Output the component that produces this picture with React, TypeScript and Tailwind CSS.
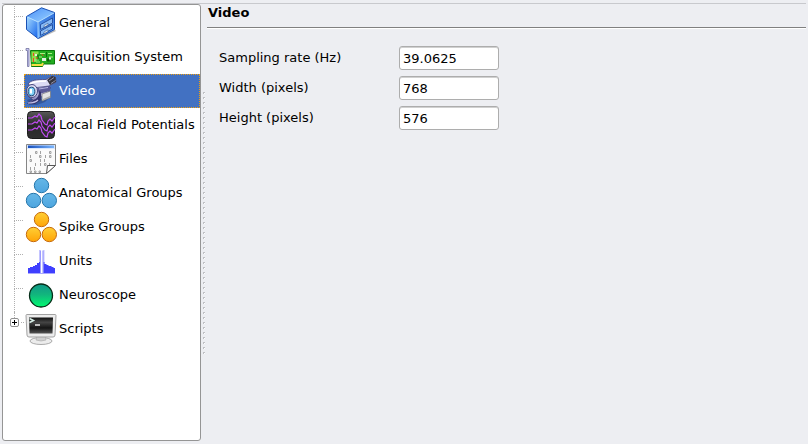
import { useState } from "react";
import type { ReactNode } from "react";

function CabinetIcon() {
  return (
    <svg viewBox="0 0 32 32" className="size-8">
      <defs>
        <linearGradient id="cabTop" x1="0" y1="0" x2="1" y2="1">
          <stop offset="0" stopColor="#4a90f8" />
          <stop offset="1" stopColor="#9ad2ff" />
        </linearGradient>
        <linearGradient id="cabSide" x1="0" y1="0" x2="1" y2="1">
          <stop offset="0" stopColor="#a8dcff" />
          <stop offset="1" stopColor="#1262ea" />
        </linearGradient>
        <linearGradient id="cabFront" x1="0" y1="0" x2="0" y2="1">
          <stop offset="0" stopColor="#2f70dc" />
          <stop offset="1" stopColor="#6cb0f8" />
        </linearGradient>
      </defs>
      <path d="M14 32 31 24l-2-2-16 8z" fill="#888" opacity=".6" />
      <path d="M1.500 9.500 16.500.8 29.500 5.500 13 15z" fill="url(#cabTop)" />
      <path d="M1.500 9.500 13 15v16.500L1.500 22.500z" fill="url(#cabSide)" />
      <path d="M13 15 29.500 5.500v17L13 31.500z" fill="url(#cabFront)" />
      <path d="M1.500 9.500 16.500.8 29.500 5.500v17L13 31.500 1.500 22.500z" fill="none" stroke="#1a50b4" strokeLinejoin="round" />
      <path d="M13 15v16M13 15 29 6M2.500 10 13 15" fill="none" stroke="#b4e0ff" strokeWidth=".9" />
      <path d="m15.500 17.500 12-6.500v5l-12 6.500zM15.500 24l12-6.500v4.500l-12 6.500z" fill="#86b9f5" stroke="#1f4a9c" strokeWidth=".9" />
      <path d="m19 18.500 4-2.200v1.700l-4 2.200zM19 25l4-2.200v1.700l-4 2.200z" fill="#f2faff" stroke="#234783" strokeWidth=".5" />
    </svg>
  );
}

function BoardIcon() {
  return (
    <svg viewBox="0 0 32 32" className="size-8">
      <path d="M1 7.500h3v18H2.500v-16H1z" fill="#c9c9f5" stroke="#72729e" strokeWidth=".8" />
      <path d="M5.500 9.500h24v13.500h-11l-1 2.500h-11z" fill="#22ac20" stroke="#0b780b" />
      <path d="M6.500 10.500h7v3h-2v7.500h-5z" fill="#8edc48" />
      <path d="M6.500 24h10.500l1-2" stroke="#f5df42" strokeWidth="2" fill="none" />
      <path d="M15 12.500h5m3 0h4M14 16h3m7 0h4M9 19h5M11 21h4" stroke="#a4f080" fill="none" />
      <path d="M13 13.500v5M21.500 11v5M25 18v3" stroke="#0c6a0c" fill="none" />
      <path d="M10 13h2v2h-2zM17 17h4v3h-4zM24 16.500h2v2h-2z" fill="#e4eee0" />
      <path d="M8.500 12v3M8.500 17v4M16.500 13l2 2M11 17h2" stroke="#ec4a20" />
      <path d="M22 17.500h2v3h-2z" fill="#0c5c0c" />
    </svg>
  );
}

function CameraIcon() {
  return (
    <svg viewBox="0 0 32 32" className="size-8">
      <defs>
        <linearGradient id="camBody" x1="0" y1="0" x2="0" y2="1">
          <stop offset="0" stopColor="#f4f3ff" />
          <stop offset=".45" stopColor="#c4c3e4" />
          <stop offset="1" stopColor="#6563a4" />
        </linearGradient>
      </defs>
      <path d="M2 25c4-2 8-2 14-1l10-3-6 6-8 3H4z" fill="#23386e" opacity=".45" />
      <path d="M2.500 28.500c4 0 8-1 11-5l9-5 3-6-10-3-7 1-6 4 1 7 4 3z" fill="url(#camBody)" stroke="#38386e" strokeWidth=".8" />
      <path d="M3 9c3-4 8-4.500 18-4.500l5-3 4.500 1L31 7l-7 4-8 1-8 1z" fill="#dcdbf4" stroke="#45457c" strokeWidth=".8" />
      <path d="M5 9c4-2.500 9-3 16-3" stroke="#fff" strokeWidth="1.500" fill="none" />
      <path d="m22 5 5-4 3.500 1L31 7l-6 3z" fill="#34343f" />
      <path d="m24 6 5-3.500M26 8.500l4.500-3" stroke="#a6a6bd" strokeWidth=".8" />
      <path d="m12 13 13-2v5l-11 3z" fill="#5b5a98" />
      <path d="m14 14 9-1.500" stroke="#b6b5e0" />
      <path d="m17 19 8.500-3v6.500L17 26z" fill="#e4e4e4" stroke="#777" strokeWidth=".7" />
      <path d="m18 24 7-3v1.500l-7 3z" fill="#aaa" />
      <path d="M8 25c4-1 6-4 6-9l2 1v8l-6 4H4z" fill="#34346e" />
      <ellipse cx="7" cy="16" rx="5.500" ry="6.500" fill="#dddcf3" stroke="#45457c" />
      <ellipse cx="6.500" cy="16.500" rx="3.400" ry="4.300" fill="#7fcff5" stroke="#174070" />
      <path d="M6 14v4.500" stroke="#fff" strokeWidth="2" />
      <path d="M3 28c4 0 8-1 10-3" stroke="#bfbde6" strokeWidth="1.200" fill="none" />
    </svg>
  );
}

function WavesIcon() {
  const wave = "M3 9h4l3-2 2 1 2-3 2 2 1 4 3 4 2 1 1-4 2-2 2 2 3-4";
  return (
    <svg viewBox="0 0 32 32" className="size-8">
      <defs>
        <linearGradient id="waveBg" x1="0" y1="0" x2="0" y2="1">
          <stop offset="0" stopColor="#585858" />
          <stop offset=".5" stopColor="#292929" />
          <stop offset="1" stopColor="#303030" />
        </linearGradient>
      </defs>
      <rect x="2.500" y="2.500" width="27" height="27" rx="4" fill="url(#waveBg)" stroke="#1c1c1c" />
      <g fill="none" stroke="#c24cf4" strokeWidth="1.200">
        <path d={wave} />
        <path d={wave} transform="translate(0 6)" />
        <path d={wave} transform="translate(0 12)" />
      </g>
    </svg>
  );
}

function FileIcon() {
  return (
    <svg viewBox="0 0 32 32" className="size-8">
      <defs>
        <linearGradient id="fileBar">
          <stop offset="0" stopColor="#174fbd" />
          <stop offset="1" stopColor="#79b4fb" />
        </linearGradient>
      </defs>
      <path d="M1.500 1.500h29v21l-9 8h-20z" fill="#fafafa" stroke="#858585" />
      <path d="M2 2h28v4H2z" fill="#d8e7ff" />
      <path d="M3 2.500h26v2.500H3z" fill="url(#fileBar)" />
      <g fill="none" stroke="#a2a2a2">
        <path d="M15.500 8v3M5.500 12v3M20.500 12v3M15.500 16v3M19.500 16v3M10.500 20v3M15.500 20v3M24.500 20v3M5.500 24v3M9.500 24v3" />
        <path d="M10.500 8.500h1.500v2h-1.500zM24.500 8.500H26v2h-1.500zM14.500 12.500H16v2h-1.500zM24.500 12.500H26v2h-1.500zM5 16.500h1.500v2H5zM19.500 20.500H21v2h-1.500zM5 28h1.500v1.500H5zM9.500 28H11v1.500H9.500zM14 28h1.500v1.500H14z" />
      </g>
      <path d="m21.500 30.500 1-8 8 0z" fill="#fff" stroke="#555" strokeLinejoin="round" />
    </svg>
  );
}

function CirclesIcon({ id, light, dark, edge }: { id: string; light: string; dark: string; edge: string }) {
  return (
    <svg viewBox="0 0 32 32" className="size-8">
      <defs>
        <linearGradient id={id} x1="0" y1="0" x2="0" y2="1">
          <stop offset="0" stopColor={light} />
          <stop offset="1" stopColor={dark} />
        </linearGradient>
      </defs>
      <g fill={`url(#${id})`} stroke={edge}>
        <circle cx="16.500" cy="8.500" r="7.200" />
        <circle cx="8.500" cy="23.500" r="7.200" />
        <circle cx="24.300" cy="23.500" r="7.200" />
      </g>
    </svg>
  );
}

function HistogramIcon() {
  return (
    <svg viewBox="0 0 32 32" className="size-8">
      <path d="M14 5h2v24h-2zM17.500 5h2v24h-2z" fill="#c4c4ff" />
      <path d="M3 28v-5h2v-1h3v-1h2v-1h2v-2h2v-1h1v11zM18.500 28V17h1v2h2v1h2v1h3v1h2v1h1.500v5z" fill="#3f3fff" />
      <path d="M3 28h27v1H3z" fill="#a8a8ff" />
      <path d="M15.500 6v22M18 6v22" stroke="#8080ff" strokeWidth=".6" />
    </svg>
  );
}

function ScopeIcon() {
  return (
    <svg viewBox="0 0 32 32" className="size-8">
      <defs>
        <linearGradient id="scope" x1="0" y1="0" x2="0" y2="1">
          <stop offset="0" stopColor="#109888" />
          <stop offset=".45" stopColor="#12b57d" />
          <stop offset="1" stopColor="#00fa70" />
        </linearGradient>
      </defs>
      <circle cx="16" cy="16.500" r="11.500" fill="url(#scope)" stroke="#062d18" strokeWidth="1.300" />
    </svg>
  );
}

function TerminalIcon() {
  return (
    <svg viewBox="0 0 32 32" className="size-8">
      <defs>
        <linearGradient id="screen" x1="0" y1="0" x2="0" y2="1">
          <stop offset="0" stopColor="#101010" />
          <stop offset=".3" stopColor="#454545" />
          <stop offset=".65" stopColor="#151515" />
          <stop offset="1" stopColor="#555" />
        </linearGradient>
      </defs>
      <ellipse cx="16" cy="28" rx="11" ry="3.500" fill="#ececec" stroke="#aaa" />
      <path d="M12 23h8l1 4q-5 2-10 0z" fill="#cfcfcf" stroke="#aaa" strokeWidth=".6" />
      <path d="M2 1.500h28q1 0 1 1L30 22q0 2-2 2H4q-2 0-2-2L1 2.500q0-1 1-1z" fill="#ececec" stroke="#a2a2a2" />
      <path d="M4 4.500h24l-.5 16h-23z" fill="url(#screen)" />
      <path d="m4.500 5.500 4 2-4 2" fill="none" stroke="#d6eee6" strokeWidth="1.500" />
      <path d="M10 12h5" stroke="#eee" strokeWidth="1.500" />
    </svg>
  );
}

const sections: { name: string; icon: ReactNode }[] = [
  { name: "General", icon: <CabinetIcon /> },
  { name: "Acquisition System", icon: <BoardIcon /> },
  { name: "Video", icon: <CameraIcon /> },
  { name: "Local Field Potentials", icon: <WavesIcon /> },
  { name: "Files", icon: <FileIcon /> },
  { name: "Anatomical Groups", icon: <CirclesIcon id="anatomy" light="#65b7e7" dark="#4da5df" edge="#2475aa" /> },
  { name: "Spike Groups", icon: <CirclesIcon id="spikes" light="#ffcf35" dark="#ffa406" edge="#c66a0b" /> },
  { name: "Units", icon: <HistogramIcon /> },
  { name: "Neuroscope", icon: <ScopeIcon /> },
  { name: "Scripts", icon: <TerminalIcon /> },
];

const fields = [
  { id: "rate", label: "Sampling rate (Hz)", value: "39.0625" },
  { id: "width", label: "Width (pixels)", value: "768" },
  { id: "height", label: "Height (pixels)", value: "576" },
];

function Branch({ expandable }: { expandable: boolean }) {
  if (expandable) {
    return (
      <div className="flex w-[21px] shrink-0 flex-col pl-[7px]">
        <span className="ml-1 h-1.5 border-l border-dotted border-[#b0b0b0]" />
        <div className="flex items-center gap-0.5">
          <button type="button" aria-label="Expand Scripts" className="flex size-[9px] items-center justify-center rounded-[2px] border border-[#909090] bg-white">
            <svg viewBox="0 0 5 5" className="size-[5px] shrink-0" shapeRendering="crispEdges">
              <path d="M2 0h1v5H2zM0 2h5v1H0z" />
            </svg>
          </button>
          <span className="w-[3px] border-t border-dotted border-[#b0b0b0]" />
        </div>
      </div>
    );
  }
  return (
    <div className="flex w-[21px] shrink-0 flex-col pr-px pl-[11px]">
      <span className="h-[11px] border-b border-l border-dotted border-[#b0b0b0]" />
      <span className="grow border-l border-dotted border-[#b0b0b0]" />
    </div>
  );
}

export default function App() {
  const [selected, setSelected] = useState("Video");
  return (
    <div className="min-h-screen bg-[#edeef2] px-0.5 pt-[3px] font-['DejaVu_Sans',sans-serif] text-[13px] leading-4 text-black">
      <div className="flex min-h-[438px] border-t border-[#c8c9cd]">
        <nav aria-label="Sections" className="w-[199px] shrink-0 rounded-[3px] border border-[#959595] bg-white pt-px">
          <ul>
            {sections.map(({ name, icon }) => (
              <li key={name} className="flex h-[34px]">
                <Branch expandable={name === "Scripts"} />
                <button
                  type="button"
                  onClick={() => setSelected(name)}
                  className={
                    name === selected
                      ? "flex grow items-center gap-0.5 border border-dotted border-[#f0a010] bg-[#4271c2] text-left whitespace-nowrap text-white"
                      : "flex grow items-center gap-0.5 border border-transparent text-left whitespace-nowrap"
                  }
                >
                  {icon}
                  {name}
                </button>
              </li>
            ))}
          </ul>
        </nav>
        <div className="flex w-1.5 shrink-0 flex-col items-center justify-center gap-[3px]">
          {Array.from({ length: 53 }, (_, i) => (
            <span key={i} className="size-0.5 border-t border-l border-[#bfc0c4] bg-white" />
          ))}
        </div>
        <main className="grow">
          <h1 className="border-b border-[#808080] pt-px pb-1.5 pl-px font-bold shadow-[0_1px_0_#fff]">Video</h1>
          <form className="flex flex-col gap-1.5 pt-[18px] pl-3">
            {fields.map(({ id, label, value }) => (
              <div key={id} className="flex items-center">
                <label htmlFor={id} className="w-[180px]">{label}</label>
                <input
                  id={id}
                  type="text"
                  defaultValue={value}
                  className="h-6 w-[100px] rounded-[3px] border border-[#adadad] bg-white px-[3px] shadow-[inset_0_1px_0_#d0d0d0] outline-none"
                />
              </div>
            ))}
          </form>
        </main>
      </div>
    </div>
  );
}
